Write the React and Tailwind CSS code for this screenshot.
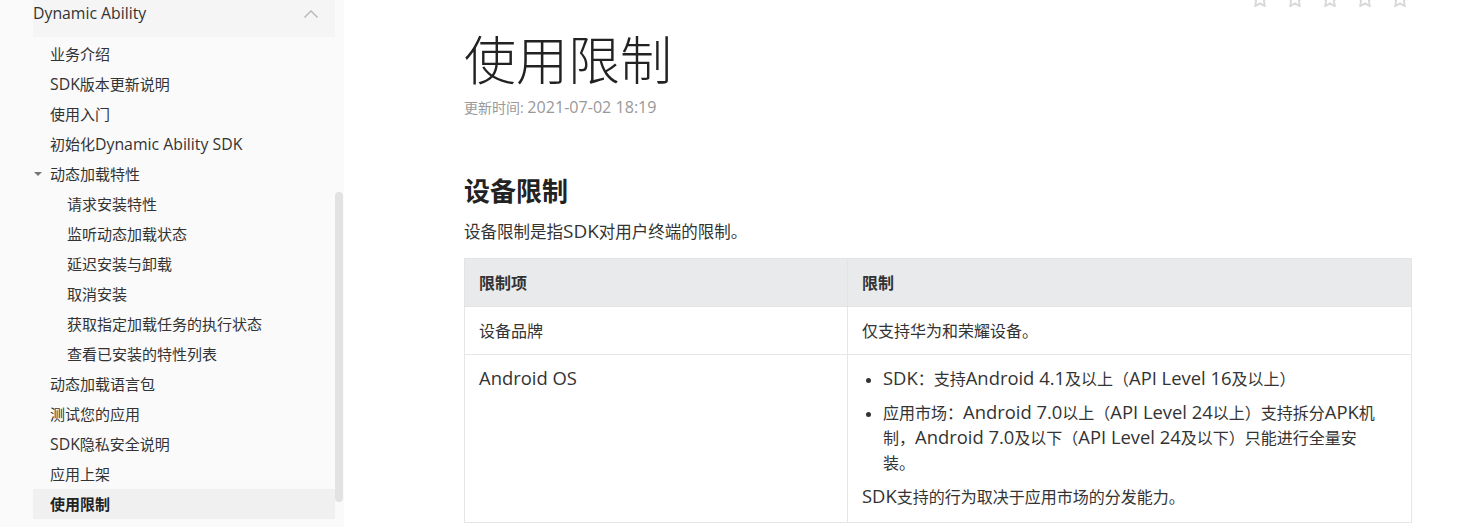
import React from "react";

const FONT = { fontFamily: '"Open Sans", "Noto Sans CJK SC", sans-serif' };

function Mix({ text, cls }) {
  const parts = text.split(/([A-Za-z0-9][A-Za-z0-9 .:\-]*[A-Za-z0-9]|[A-Za-z0-9])/);
  return parts.map((p, i) =>
    /[A-Za-z0-9]/.test(p) ? (
      <span key={i} className={cls}>
        {p}
      </span>
    ) : (
      <React.Fragment key={i}>{p}</React.Fragment>
    )
  );
}

const MAIN = "text-[1.15em] leading-none";
const SIDE = "text-[1.055em] leading-none";

function Star() {
  return (
    <svg width="20" height="20" viewBox="0 0 24 24" fill="none" stroke="#d9d9d9" strokeWidth="2.2" strokeLinejoin="round">
      <path d="M12 2.5l2.9 6.1 6.6.8-4.9 4.6 1.3 6.6L12 17.3l-5.9 3.3 1.3-6.6-4.9-4.6 6.6-.8z" />
    </svg>
  );
}

const items = [
  { t: "业务介绍", lvl: 1 },
  { t: "SDK版本更新说明", lvl: 1 },
  { t: "使用入门", lvl: 1 },
  { t: "初始化Dynamic Ability SDK", lvl: 1 },
  { t: "动态加载特性", lvl: 1, tri: true },
  { t: "请求安装特性", lvl: 2 },
  { t: "监听动态加载状态", lvl: 2 },
  { t: "延迟安装与卸载", lvl: 2 },
  { t: "取消安装", lvl: 2 },
  { t: "获取指定加载任务的执行状态", lvl: 2 },
  { t: "查看已安装的特性列表", lvl: 2 },
  { t: "动态加载语言包", lvl: 1 },
  { t: "测试您的应用", lvl: 1 },
  { t: "SDK隐私安全说明", lvl: 1 },
  { t: "应用上架", lvl: 1 },
  { t: "使用限制", lvl: 1, active: true },
];

function Bullet({ children }) {
  return (
    <li className="mb-[9px] flex">
      <span className="mt-[11px] mr-[12px] ml-[4px] h-[5px] w-[5px] shrink-0 rounded-full bg-[#333]" />
      <span>{children}</span>
    </li>
  );
}

export default function App() {
  return (
    <div className="flex h-[527px] w-[1459px] overflow-hidden bg-white text-[#333]" style={FONT}>
      {/* Sidebar */}
      <div className="flex w-[344px] shrink-0 bg-[#fafafa]">
        <div className="ml-[33px] w-[302px]">
          <div className="flex h-[37px] items-start justify-between bg-[#f5f5f5] pt-[2px] pr-[16px]">
            <span className="text-[15.8px] leading-[22px] text-[#333]">Dynamic Ability</span>
            <svg width="16" height="10" viewBox="0 0 16 10" className="mt-[7px]" fill="none" stroke="#b5b5b5" strokeWidth="1.3">
              <path d="M1.5 8.5L8 2l6.5 6.5" />
            </svg>
          </div>
          <div className="pt-[2px]">
            {items.map((it) => (
              <div
                key={it.t}
                className={`relative flex h-[30px] items-center whitespace-nowrap text-[15px] leading-[22px] ${
                  it.lvl === 2 ? "pl-[34px]" : "pl-[17px]"
                } ${it.active ? "bg-[#f0f0f0] font-bold text-[#222]" : "text-[#333]"}`}
              >
                {it.tri && (
                  <span className="absolute left-[1px] top-[13px] h-0 w-0 border-x-[4px] border-t-[4px] border-x-transparent border-t-[#777]" />
                )}
                <span>
                  <Mix text={it.t} cls={SIDE} />
                </span>
              </div>
            ))}
          </div>
        </div>
        <div className="w-[9px] pt-[192px]">
          <div className="h-[310px] w-[8px] rounded-[4px] bg-[#e2e2e2]" />
        </div>
      </div>

      {/* Main */}
      <div className="flex-1 pl-[120px] pr-[47px]">
        <div className="flex h-[9px] items-end justify-end gap-[15px] overflow-hidden pr-[2px]">
          {[0, 1, 2, 3, 4].map((i) => (
            <div key={i} className="shrink-0">
              <Star />
            </div>
          ))}
        </div>
        <h1 className="mt-[21px] text-[52px] font-light leading-[60px] text-[#222]">使用限制</h1>
        <div className="mt-[8px] whitespace-nowrap text-[14px] leading-[20px] text-[#999]">
          更新时间<Mix text=": 2021-07-02 18:19" cls={MAIN} />
        </div>
        <h2 className="mt-[56px] text-[26px] font-bold leading-[34px] text-[#222]">设备限制</h2>
        <p className="mt-[13px] text-[16.5px] leading-[22px] text-[#333]">
          <Mix text="设备限制是指SDK对用户终端的限制。" cls={MAIN} />
        </p>
        <table className="mt-[15px] w-[948px] border-collapse text-[16px] text-[#333]">
          <thead>
            <tr className="bg-[#e9eaec]">
              <th className="h-[48px] w-[383px] border border-[#e2e3e5] px-[14px] text-left font-bold">限制项</th>
              <th className="h-[48px] border border-[#e2e3e5] px-[14px] text-left font-bold">限制</th>
            </tr>
          </thead>
          <tbody>
            <tr>
              <td className="h-[48px] border border-[#e6e6e6] px-[14px]">设备品牌</td>
              <td className="h-[48px] border border-[#e6e6e6] px-[14px]">仅支持华为和荣耀设备。</td>
            </tr>
            <tr>
              <td className="border border-[#e6e6e6] px-[14px] pt-[12px] pb-[12px] align-top leading-[25px]">
                <Mix text="Android OS" cls={MAIN} />
              </td>
              <td className="border border-[#e6e6e6] px-[14px] pt-[12px] pb-[12px] align-top leading-[25px] whitespace-nowrap">
                <ul>
                  <Bullet>
                    <Mix text="SDK：支持Android 4.1及以上（API Level 16及以上）" cls={MAIN} />
                  </Bullet>
                  <Bullet>
                    <span className="block">
                      <Mix text="应用市场：Android 7.0以上（API Level 24以上）支持拆分APK机" cls={MAIN} />
                    </span>
                    <span className="block">
                      <Mix text="制，Android 7.0及以下（API Level 24及以下）只能进行全量安" cls={MAIN} />
                    </span>
                    <span className="block">装。</span>
                  </Bullet>
                </ul>
                <p>
                  <Mix text="SDK支持的行为取决于应用市场的分发能力。" cls={MAIN} />
                </p>
              </td>
            </tr>
          </tbody>
        </table>
      </div>
    </div>
  );
}
